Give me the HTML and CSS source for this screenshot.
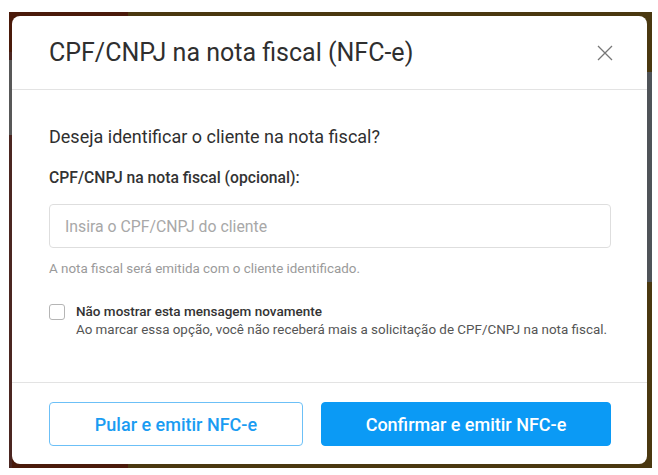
FILE: index.html
```html
<!DOCTYPE html>
<html lang="pt-BR">
<head>
<meta charset="utf-8">
<title>CPF/CNPJ na nota fiscal</title>
<link rel="stylesheet" href="styles.css">
</head>
<body>
<div class="backdrop">
  <div class="modal">
    <div class="modal-header">
      <h1 class="modal-title">CPF/CNPJ na nota fiscal (NFC-e)</h1>
      <button class="close" aria-label="Fechar">
        <svg width="16" height="16" viewBox="0 0 16 16"><path d="M1 1 L15 15 M15 1 L1 15" stroke="#777" stroke-width="1.3" fill="none"/></svg>
      </button>
    </div>
    <div class="modal-body">
      <p class="question">Deseja identificar o cliente na nota fiscal?</p>
      <label class="field-label">CPF/CNPJ na nota fiscal (opcional):</label>
      <input class="field-input" type="text" placeholder="Insira o CPF/CNPJ do cliente">
      <p class="help">A nota fiscal será emitida com o cliente identificado.</p>
      <div class="check-row">
        <span class="checkbox"></span>
        <div class="check-text">
          <div class="check-title">Não mostrar esta mensagem novamente</div>
          <div class="check-desc">Ao marcar essa opção, você não receberá mais a solicitação de CPF/CNPJ na nota fiscal.</div>
        </div>
      </div>
    </div>
    <div class="modal-footer">
      <button class="btn btn-outline">Pular e emitir NFC-e</button>
      <button class="btn btn-primary">Confirmar e emitir NFC-e</button>
    </div>
  </div>
</div>
</body>
</html>
```
FILE: styles.css
```css
* { box-sizing: border-box; }
html, body { margin: 0; padding: 0; background: #fff; }
body { font-family: Roboto, "Noto Sans", Arial, sans-serif; color: #333; }

.backdrop {
  margin: 12px 0 0 9px;
  width: 643px;
  height: 456px;
  padding: 4px 5px 4px 3px;
  background-color: #4a3810;
  background-image:
    linear-gradient(#585858, #585858),
    linear-gradient(#4f5358, #4f5358),
    linear-gradient(#4b2621, #4b2621),
    linear-gradient(to right, #4a1a0a 0, #4a1a0a 119px, #4a3810 119px);
  background-repeat: no-repeat;
  background-position: 0 48px, right 0 top 60px, 0 40px, 0 0;
  background-size: 3px 75px, 5px 210px, 3px 100%, 100% 100%;
}

.modal {
  width: 635px;
  height: 448px;
  background: #fff;
  border-radius: 8px;
  display: flex;
  flex-direction: column;
  overflow: hidden;
}

.modal-header {
  height: 74px;
  padding: 0 34px 0 37px;
  display: flex;
  align-items: center;
  justify-content: space-between;
  border-bottom: 1px solid #e3e3e3;
}
.modal-title {
  margin: 0;
  font-size: 25px;
  font-weight: 400;
  color: #2f2f2f;
}
.close {
  border: 0;
  background: none;
  padding: 0;
  width: 16px;
  height: 16px;
  display: flex;
}

.modal-body {
  flex: 1;
  padding: 35px 36px 0 37px;
  display: flex;
  flex-direction: column;
}
.question {
  margin: 0;
  font-size: 18px;
  line-height: 24px;
  color: #2f2f2f;
}
.field-label {
  margin-top: 19px;
  font-size: 15.7px;
  line-height: 20px;
  font-weight: 500;
  color: #333;
}
.field-input {
  margin-top: 16px;
  height: 44px;
  width: 562px;
  border: 1px solid #dedede;
  border-radius: 4px;
  padding: 0 15px;
  font-family: inherit;
  font-size: 15.8px;
  color: #333;
  outline: none;
}
.field-input::placeholder { color: #a8a8a8; }
.help {
  margin: 13px 0 0;
  font-size: 13.4px;
  line-height: 16px;
  color: #9a9a9a;
}
.check-row {
  margin-top: 25px;
  display: flex;
  gap: 11px;
  align-items: flex-start;
}
.checkbox {
  width: 16px;
  height: 16px;
  border: 1px solid #b5b5b5;
  border-radius: 3px;
  flex: none;
  margin-top: 2px;
}
.check-text { white-space: nowrap; }
.check-title {
  font-size: 13.5px;
  line-height: 18px;
  font-weight: 500;
  color: #333;
}
.check-desc {
  margin-top: 1px;
  font-size: 13.4px;
  line-height: 18px;
  color: #555;
}

.modal-footer {
  border-top: 1px solid #e3e3e3;
  padding: 19px 36px 18px 37px;
  display: flex;
  gap: 18px;
}
.btn {
  height: 44px;
  border-radius: 4px;
  font-family: inherit;
  font-size: 18px;
  font-weight: 500;
  cursor: pointer;
}
.btn-outline {
  width: 254px;
  background: #fff;
  border: 1px solid #6cc0f7;
  color: #1a9cf2;
}
.btn-primary {
  flex: 1;
  background: #0b9af5;
  border: 1px solid #0b9af5;
  color: #fff;
}
```
